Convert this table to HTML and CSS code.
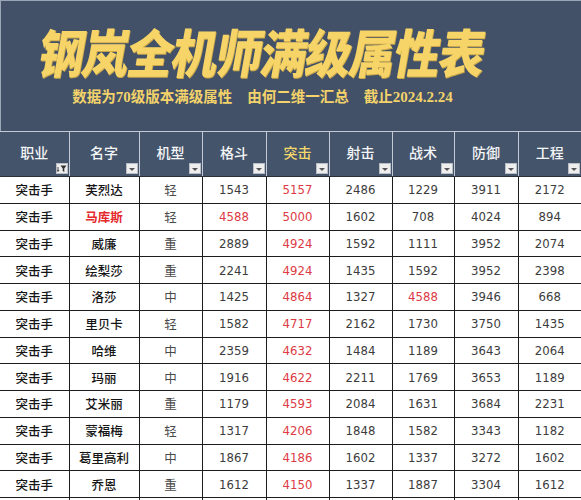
FILE: index.html
```html
<!DOCTYPE html>
<html lang="zh-CN">
<head>
<meta charset="utf-8">
<title>钢岚全机师满级属性表</title>
<link rel="stylesheet" href="styles.css">
</head>
<body>
<div class="sheet">
  <header class="banner">
    <h1 class="title">钢岚全机师满级属性表</h1>
    <p class="subtitle"><span>数据为<b class="num">70</b>级版本满级属性</span><span>由何二维一汇总</span><span>截止<b class="num">2024.2.24</b></span></p>
  </header>
  <table class="grid">
    <colgroup>
      <col class="c69"><col class="c70"><col class="c63"><col class="c64"><col class="c63"><col class="c63"><col class="c62"><col class="c64"><col class="c63">
    </colgroup>
    <thead>
      <tr>
        <th><span class="hl">职业</span><span class="fbtn"><svg viewBox="0 0 10 9" width="10" height="9"><path d="M1 3v4M0 6l1 1.5L2 6" stroke="#333" stroke-width="0.9" fill="none"/><path d="M3.5 1.5h6L7.3 4.5v3.5l-1.6-1V4.5z" fill="#333"/></svg></span></th>
        <th><span class="hl">名字</span><span class="fbtn"><i class="tri"></i></span></th>
        <th><span class="hl">机型</span><span class="fbtn"><i class="tri"></i></span></th>
        <th><span class="hl">格斗</span><span class="fbtn"><i class="tri"></i></span></th>
        <th><span class="hl gold">突击</span><span class="fbtn"><i class="tri"></i></span></th>
        <th><span class="hl">射击</span><span class="fbtn"><i class="tri"></i></span></th>
        <th><span class="hl">战术</span><span class="fbtn"><i class="tri"></i></span></th>
        <th><span class="hl">防御</span><span class="fbtn"><i class="tri"></i></span></th>
        <th><span class="hl">工程</span><span class="fbtn"><i class="tri"></i></span></th>
      </tr>
    </thead>
    <tbody>
      <tr><td class="cjk">突击手</td><td class="cjk">芙烈达</td><td class="type">轻</td><td>1543</td><td class="red">5157</td><td>2486</td><td>1229</td><td>3911</td><td>2172</td></tr>
      <tr><td class="cjk">突击手</td><td class="cjk redname">马库斯</td><td class="type">轻</td><td class="red">4588</td><td class="red">5000</td><td>1602</td><td>708</td><td>4024</td><td>894</td></tr>
      <tr><td class="cjk">突击手</td><td class="cjk">威廉</td><td class="type">重</td><td>2889</td><td class="red">4924</td><td>1592</td><td>1111</td><td>3952</td><td>2074</td></tr>
      <tr><td class="cjk">突击手</td><td class="cjk">绘梨莎</td><td class="type">重</td><td>2241</td><td class="red">4924</td><td>1435</td><td>1592</td><td>3952</td><td>2398</td></tr>
      <tr><td class="cjk">突击手</td><td class="cjk">洛莎</td><td class="type">中</td><td>1425</td><td class="red">4864</td><td>1327</td><td class="red">4588</td><td>3946</td><td>668</td></tr>
      <tr><td class="cjk">突击手</td><td class="cjk">里贝卡</td><td class="type">轻</td><td>1582</td><td class="red">4717</td><td>2162</td><td>1730</td><td>3750</td><td>1435</td></tr>
      <tr><td class="cjk">突击手</td><td class="cjk">哈维</td><td class="type">中</td><td>2359</td><td class="red">4632</td><td>1484</td><td>1189</td><td>3643</td><td>2064</td></tr>
      <tr><td class="cjk">突击手</td><td class="cjk">玛丽</td><td class="type">中</td><td>1916</td><td class="red">4622</td><td>2211</td><td>1769</td><td>3653</td><td>1189</td></tr>
      <tr><td class="cjk">突击手</td><td class="cjk">艾米丽</td><td class="type">重</td><td>1179</td><td class="red">4593</td><td>2084</td><td>1631</td><td>3684</td><td>2231</td></tr>
      <tr><td class="cjk">突击手</td><td class="cjk">蒙福梅</td><td class="type">轻</td><td>1317</td><td class="red">4206</td><td>1848</td><td>1582</td><td>3343</td><td>1182</td></tr>
      <tr><td class="cjk">突击手</td><td class="cjk">葛里高利</td><td class="type">中</td><td>1867</td><td class="red">4186</td><td>1602</td><td>1337</td><td>3272</td><td>1602</td></tr>
      <tr><td class="cjk">突击手</td><td class="cjk">乔恩</td><td class="type">重</td><td>1612</td><td class="red">4150</td><td>1337</td><td>1887</td><td>3304</td><td>1612</td></tr>
      <tr class="cut"><td></td><td></td><td></td><td></td><td></td><td></td><td></td><td></td><td></td></tr>
    </tbody>
  </table>
</div>
</body>
</html>
```
FILE: styles.css
```css
html, body {
  margin: 0;
  padding: 0;
  background: #ffffff;
}
body {
  width: 581px;
  height: 500px;
  overflow: hidden;
  font-family: "Noto Sans CJK SC", sans-serif;
}
.sheet {
  width: 581px;
}
.banner {
  height: 131px;
  box-sizing: border-box;
  background: #425168;
  border-left: 1px solid #9aa6b8;
  border-top: 1px solid #9aa6b8;
  padding: 20px 57px 0 0;
  display: flex;
  flex-direction: column;
  align-items: center;
  gap: 5px;
}
.title {
  margin: 0;
  font-family: "Noto Sans CJK SC", sans-serif;
  font-weight: 900;
  font-size: 52px;
  line-height: 60px;
  letter-spacing: -2px;
  color: #f6d467;
  transform: skewX(-10deg) scaleX(0.89);
  text-shadow: 1px 1px 0 #c9a64a;
  white-space: nowrap;
}
.subtitle {
  margin: 0;
  display: flex;
  gap: 15px;
  font-family: "Noto Sans CJK SC", sans-serif;
  font-weight: 700;
  font-size: 14.5px;
  line-height: 20px;
  color: #f3d36a;
  white-space: nowrap;
}
.subtitle .num {
  font-family: "Liberation Serif", serif;
  font-weight: 700;
  font-size: 15px;
}
.grid {
  width: 581px;
  border-collapse: collapse;
  table-layout: fixed;
}
.c69 { width: 69px; }
.c70 { width: 70px; }
.c63 { width: 63px; }
.c64 { width: 64px; }
.c62 { width: 62px; }
.grid th {
  position: relative;
  height: 45px;
  padding: 0 0 4px;
  box-sizing: border-box;
  background: #44546a;
  border: 1px solid #c3cad5;
  border-bottom: 1px solid #2a2f38;
  color: #f4f5f7;
  font-size: 14px;
  font-weight: 500;
  text-align: center;
  vertical-align: middle;
}
.grid th:first-child { border-left: none; }
.grid th:last-child { border-right: none; }
.hl { display: inline-block; }
.gold { color: #f4d86a; }
.fbtn {
  position: absolute;
  right: 1px;
  bottom: 2px;
  width: 12px;
  height: 11px;
  box-sizing: border-box;
  background: #eeeeee;
  border: 1px solid #b9bec6;
  display: flex;
  align-items: center;
  justify-content: center;
}
.tri {
  width: 0;
  height: 0;
  border-left: 3px solid transparent;
  border-right: 3px solid transparent;
  border-top: 3px solid #555;
  margin-top: 1px;
}
.grid td {
  height: 26.75px;
  padding: 0;
  box-sizing: border-box;
  border: 1px solid #1c1c1c;
  text-align: center;
  vertical-align: middle;
  font-family: "Liberation Sans Narrow", "DejaVu Sans Condensed", "Liberation Sans", sans-serif;
  font-size: 13px;
  color: #3c3c3c;
}
.grid td:first-child { border-left: none; }
.grid td:last-child { border-right: none; }
.grid td.cjk {
  font-family: "Noto Sans CJK SC", sans-serif;
  font-size: 12.5px;
  font-weight: 500;
  color: #151515;
}
.grid td.type {
  font-family: "Noto Sans CJK SC", sans-serif;
  font-size: 12.5px;
  font-weight: 400;
  color: #4a4a4a;
}
.grid td.red { color: #dc3a44; }
.grid td.redname {
  color: #e52a2e;
  font-weight: 700;
}
.grid tr.cut td { height: 27px; }
```
